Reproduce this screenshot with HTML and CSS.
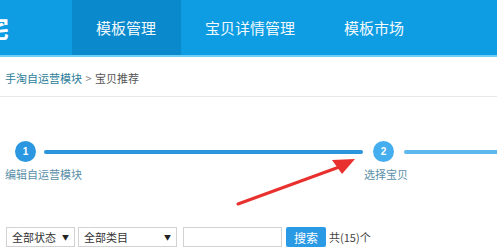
FILE: index.html
```html
<!DOCTYPE html>
<html lang="zh-CN">
<head>
<meta charset="UTF-8">
<title>宝贝推荐</title>
<link rel="stylesheet" href="styles.css">
</head>
<body>
<div class="header">
    <div class="logo">宅</div>
    <div class="nav">
        <a class="nav-item active">模板管理</a>
        <a class="nav-item">宝贝详情管理</a>
        <a class="nav-item">模板市场</a>
    </div>
</div>

<div class="crumbs">
    <a class="crumb-link">手淘自运营模块</a>
    <span class="crumb-sep">&gt;</span>
    <span class="crumb-now">宝贝推荐</span>
</div>

<div class="steps">
    <div class="dots">
        <div class="dot">1</div>
        <div class="bar"></div>
        <div class="dot dot-now">2</div>
        <div class="bar bar-light"></div>
    </div>
    <div class="names">
        <div class="step-name first">编辑自运营模块</div>
        <div class="step-name">选择宝贝</div>
    </div>
</div>

<div class="filters">
    <div class="select sel-status">全部状态<span class="caret">▼</span></div>
    <div class="select sel-cat">全部类目<span class="caret">▼</span></div>
    <input class="search-box" type="text">
    <button class="btn" type="button">搜索</button>
    <span class="count">共(15)个</span>
</div>

<!-- red annotation arrow -->
<svg class="arrow" width="130" height="60" viewBox="0 0 130 60">
    <path d="M8 54 L112 16" stroke="#e8312f" stroke-width="3" stroke-linecap="round" fill="none"/>
    <polygon points="125,9 102,10 112,24" fill="#e8312f"/>
</svg>
</body>
</html>
```

FILE: styles.css
```css
/* page basics */
body {
    position: relative;
    margin: 0;
    font-family: "Microsoft YaHei", "Noto Sans CJK SC", sans-serif;
    background: #fff;
    overflow: hidden;
}

/* top blue bar */
.header {
    display: flex;
    height: 55px;
    background-color: #0e9de3;
    border-bottom: 2px solid #6fd0f7;
    overflow: hidden;
}
.logo {
    width: 72px;
    text-indent: -15px;
    color: #fff;
    font-size: 24px;
    line-height: 55px;
    font-weight: bold;
    overflow: hidden;
}
.nav {
    display: flex;
}
.nav-item {
    display: block;
    padding: 0 25px 0 24px;
    color: #f2f9fd;
    font-size: 15px;
    line-height: 55px;
}
.nav-item.active {
    background-color: #0a8acc;
}

/* breadcrumb */
.crumbs {
    height: 39px;
    padding-left: 5px;
    font-size: 11px;
    line-height: 42px;
    border-bottom: 1px solid #e6e9ec;
    color: #555;
}
.crumb-link {
    color: #2c7d98;
}
.crumb-sep {
    color: #888;
    margin: 0 1px;
}

/* step progress */
.steps {
    box-sizing: border-box;
    height: 130px;
    padding-top: 44px;
}
.dots {
    display: flex;
    align-items: center;
    padding-left: 15px;
}
.dot {
    flex: none;
    width: 21px;
    height: 21px;
    border-radius: 50%;
    background-color: #2a97e0;
    color: #fff;
    font-family: "Liberation Sans", Arial, sans-serif;
    font-size: 10px;
    font-weight: bold;
    line-height: 21px;
    text-align: center;
}
.dot-now {
    margin-left: 10px;
    background-color: #45aeee;
}
.bar {
    flex: none;
    width: 319px;
    height: 4px;
    margin-left: 8px;
    border-radius: 2px;
    background-color: #2a94dc;
}
.bar-light {
    flex: 1;
    margin-left: 10px;
    margin-right: -4px;
    background-color: #5db8ef;
}
.names {
    display: flex;
    margin-top: 4px;
    padding-left: 5px;
}
.step-name {
    font-size: 11px;
    color: #5b8fa8;
    white-space: nowrap;
}
.step-name.first {
    width: 359px;
}
.arrow {
    position: absolute;
    left: 230px;
    top: 150px;
}

/* search row */
.filters {
    display: flex;
    align-items: center;
    padding-left: 6px;
    gap: 3px;
}
.select {
    display: flex;
    justify-content: space-between;
    align-items: center;
    box-sizing: border-box;
    height: 20px;
    padding: 0 5px;
    border: 1px solid #d2d2d2;
    font-size: 11px;
    color: #333;
}
.sel-status {
    width: 69px;
}
.sel-cat {
    width: 99px;
}
.caret {
    font-size: 7px;
    color: #222;
}
.search-box {
    box-sizing: border-box;
    width: 99px;
    height: 20px;
    margin: 0 0 0 3px;
    border: 1px solid #d2d2d2;
}
.btn {
    height: 20px;
    width: 40px;
    margin-left: 1px;
    padding: 0;
    border: none;
    border-radius: 2px;
    background-color: #2b9ae5;
    color: #fff;
    font-family: "Noto Sans CJK SC", sans-serif;
    font-size: 12px;
}
.count {
    font-size: 11px;
    color: #444;
}
```
